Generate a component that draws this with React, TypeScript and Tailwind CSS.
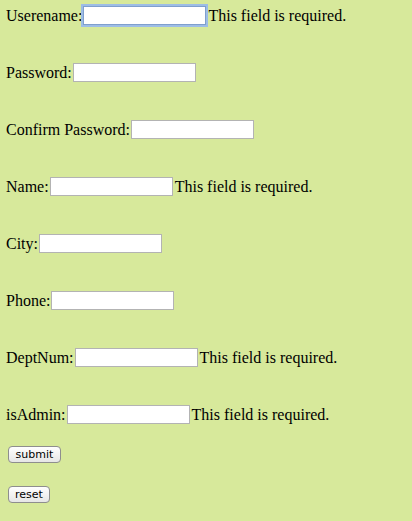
const fields = [
  { label: "Userename:", err: true, focus: true },
  { label: "Password:", err: false },
  { label: "Confirm Password:", err: false },
  { label: "Name:", err: true },
  { label: "City:", err: false },
  { label: "Phone:", err: false },
  { label: "DeptNum:", err: true },
  { label: "isAdmin:", err: true },
];

function App() {
  return (
    <div className="min-h-[521px] w-full bg-[#d7e99b] pt-[6px] pl-[6px] text-[16px] text-black font-['Liberation_Serif',serif]">
      <div className="flex flex-col gap-[38px]">
        {fields.map((f) => (
          <div key={f.label} className="flex items-center h-[19px] leading-none">
            <span>{f.label}</span>
            <input
              type="text"
              className={
                f.focus
                  ? "ml-[1px] mr-[2px] w-[123px] h-[19px] bg-white border border-[#7f9fcd] shadow-[0_0_0_2px_#9dbde6] outline-none"
                  : "ml-[1px] mr-[2px] w-[123px] h-[19px] bg-white border border-[#b3b3b3] outline-none"
              }
            />
            {f.err && <span>This field is required.</span>}
          </div>
        ))}
      </div>
      <div className="flex flex-col items-start gap-[23px] mt-[22px] ml-[2px] font-['DejaVu_Sans',sans-serif] text-[11px]">
        <button className="w-[53px] h-[17px] rounded-[4px] border border-[#8e8e8e] bg-gradient-to-b from-white to-[#e6e6e6] leading-none">
          submit
        </button>
        <button className="w-[42px] h-[17px] rounded-[4px] border border-[#8e8e8e] bg-gradient-to-b from-white to-[#e6e6e6] leading-none">
          reset
        </button>
      </div>
    </div>
  );
}

export default App;
